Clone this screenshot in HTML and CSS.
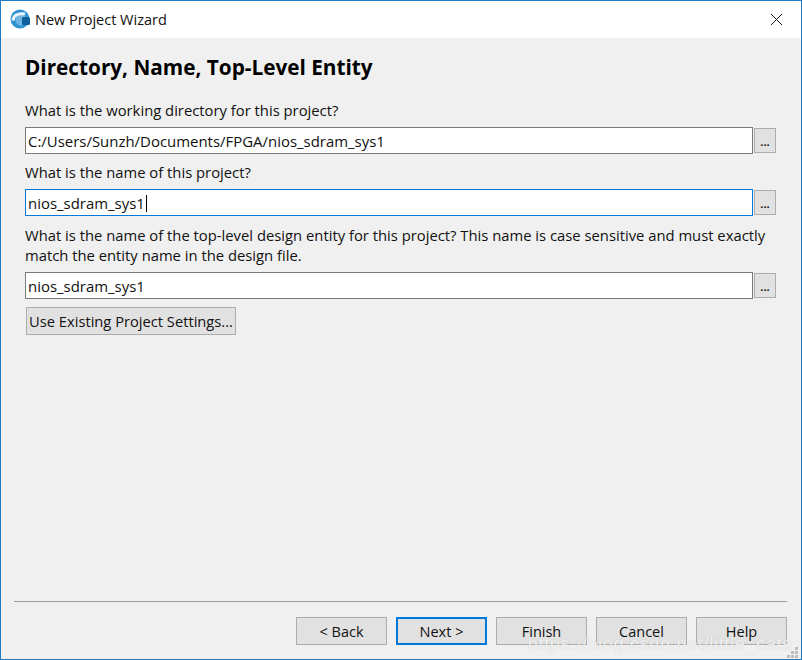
FILE: index.html
```html
<!DOCTYPE html>
<html lang="en">
<head>
<meta charset="UTF-8">
<meta name="viewport" content="width=device-width, initial-scale=1.0">
<title>New Project Wizard</title>
<link rel="stylesheet" href="styles.css">
</head>
<body>
<div class="window">
<div class="titlebar">
<svg class="app-icon" width="20" height="20" viewBox="0 0 20 20">
<circle cx="10" cy="10" r="9.5" fill="#2f93d3"/>
<circle cx="11" cy="11" r="5.500" fill="#6fb4e0"/>
<path d="M3.200 11.500C3 7 7.500 3.500 15 5" stroke="#eef4f8" stroke-width="3" fill="none"/>
<rect x="12" y="8" width="8" height="8" rx="1.500" fill="#0d5f9e"/>
</svg>
<span class="title">New Project Wizard</span>
<svg class="close-icon" width="11" height="11" viewBox="0 0 11 11">
<path d="M0 0L11 11M11 0L0 11" stroke="#1a1a1a" stroke-width="1" fill="none"/>
</svg>
</div>
<div class="content">
<h1>Directory, Name, Top-Level Entity</h1>
<label class="field-label">What is the working directory for this project?</label>
<div class="field-row">
<div class="text-box">C:/Users/Sunzh/Documents/FPGA/nios_sdram_sys1</div>
<button class="browse">...</button>
</div>
<label class="field-label">What is the name of this project?</label>
<div class="field-row">
<div class="text-box focused">nios_sdram_sys1<span class="caret"></span></div>
<button class="browse">...</button>
</div>
<label class="field-label long">What is the name of the top-level design entity for this project? This name is case sensitive and must exactly match the entity name in the design file.</label>
<div class="field-row">
<div class="text-box">nios_sdram_sys1</div>
<button class="browse">...</button>
</div>
<button class="btn existing">Use Existing Project Settings...</button>
</div>
<div class="footer">
<button class="btn">&lt; Back</button>
<button class="btn default">Next &gt;</button>
<button class="btn">Finish</button>
<button class="btn">Cancel</button>
<button class="btn">Help</button>
</div>
<div class="watermark">https://blog.csdn.net/little_cats</div>
<svg class="grip" width="11" height="11" viewBox="0 0 11 11">
<path d="M8 0h3v3H8zM4 4h3v3H4zM8 4h3v3H8zM0 8h3v3H0zM4 8h3v3H4zM8 8h3v3H8z" fill="#bdbdbd"/>
</svg>
</div>
</body>
</html>
```

FILE: styles.css
```css
html, body {
    margin: 0;
    padding: 0;
}
body {
    font-family: "Open Sans", "Noto Sans", sans-serif;
    font-size: 14.5px;
    color: #111;
}
.window {
    position: relative;
    box-sizing: border-box;
    width: 802px;
    height: 660px;
    display: flex;
    flex-direction: column;
    background-color: #f0f0f0;
    border: 1px solid #1a7bc9;
}
.titlebar {
    height: 37px;
    flex: none;
    display: flex;
    align-items: center;
    padding: 0 19px 0 9px;
    background-color: #fff;
}
.app-icon {
    margin-right: 5px;
    margin-top: -1px;
}
.title {
    flex: 1;
}
.content {
    flex: 1;
    padding: 0 25px 0 24px;
}
h1 {
    margin: 15px 0 19px;
    font-size: 20.75px;
    line-height: 28px;
    font-weight: 700;
    color: #000;
}
.field-label {
    display: block;
    font-size: 14.8px;
    line-height: 20px;
    margin-bottom: 7px;
}
.field-label.long {
    padding-top: 1px;
}
.field-row {
    display: flex;
    align-items: center;
    gap: 1px;
    margin-bottom: 8px;
}
.text-box {
    box-sizing: border-box;
    flex: 1;
    height: 27px;
    line-height: 27px;
    font-size: 14.95px;
    padding-left: 2px;
    background-color: #fff;
    border: 1px solid #7a7a7a;
}
.text-box.focused {
    border-color: #0078d7;
}
.caret {
    display: inline-block;
    width: 1px;
    height: 17px;
    margin-left: 1px;
    vertical-align: -3px;
    background-color: #000;
}
.btn, .browse {
    box-sizing: border-box;
    font-family: inherit;
    font-size: inherit;
    color: #111;
    background-color: #e1e1e1;
    border: 1px solid #adadad;
    padding: 0;
}
.browse {
    width: 22px;
    height: 25px;
    line-height: 25px;
    font-weight: 700;
    font-size: 11px;
}
.btn {
    width: 91px;
    height: 28px;
}
.btn.default {
    border: 2px solid #0078d7;
}
.existing {
    display: block;
    width: 210px;
    font-size: 14.7px;
    margin-left: 1px;
}
.footer {
    flex: none;
    display: flex;
    justify-content: flex-end;
    gap: 9px;
    margin: 0 14px 14px 13px;
    padding-top: 15px;
    border-top: 1px solid #a0a0a0;
}
.watermark {
    position: absolute;
    right: 9px;
    bottom: 4px;
    font-family: "Liberation Sans", sans-serif;
    font-size: 18px;
    letter-spacing: .7px;
    color: rgba(255, 255, 255, .75);
    text-shadow: 0 0 1px rgba(150, 150, 150, .5);
}
.grip {
    position: absolute;
    right: 3px;
    bottom: 1px;
}
```
